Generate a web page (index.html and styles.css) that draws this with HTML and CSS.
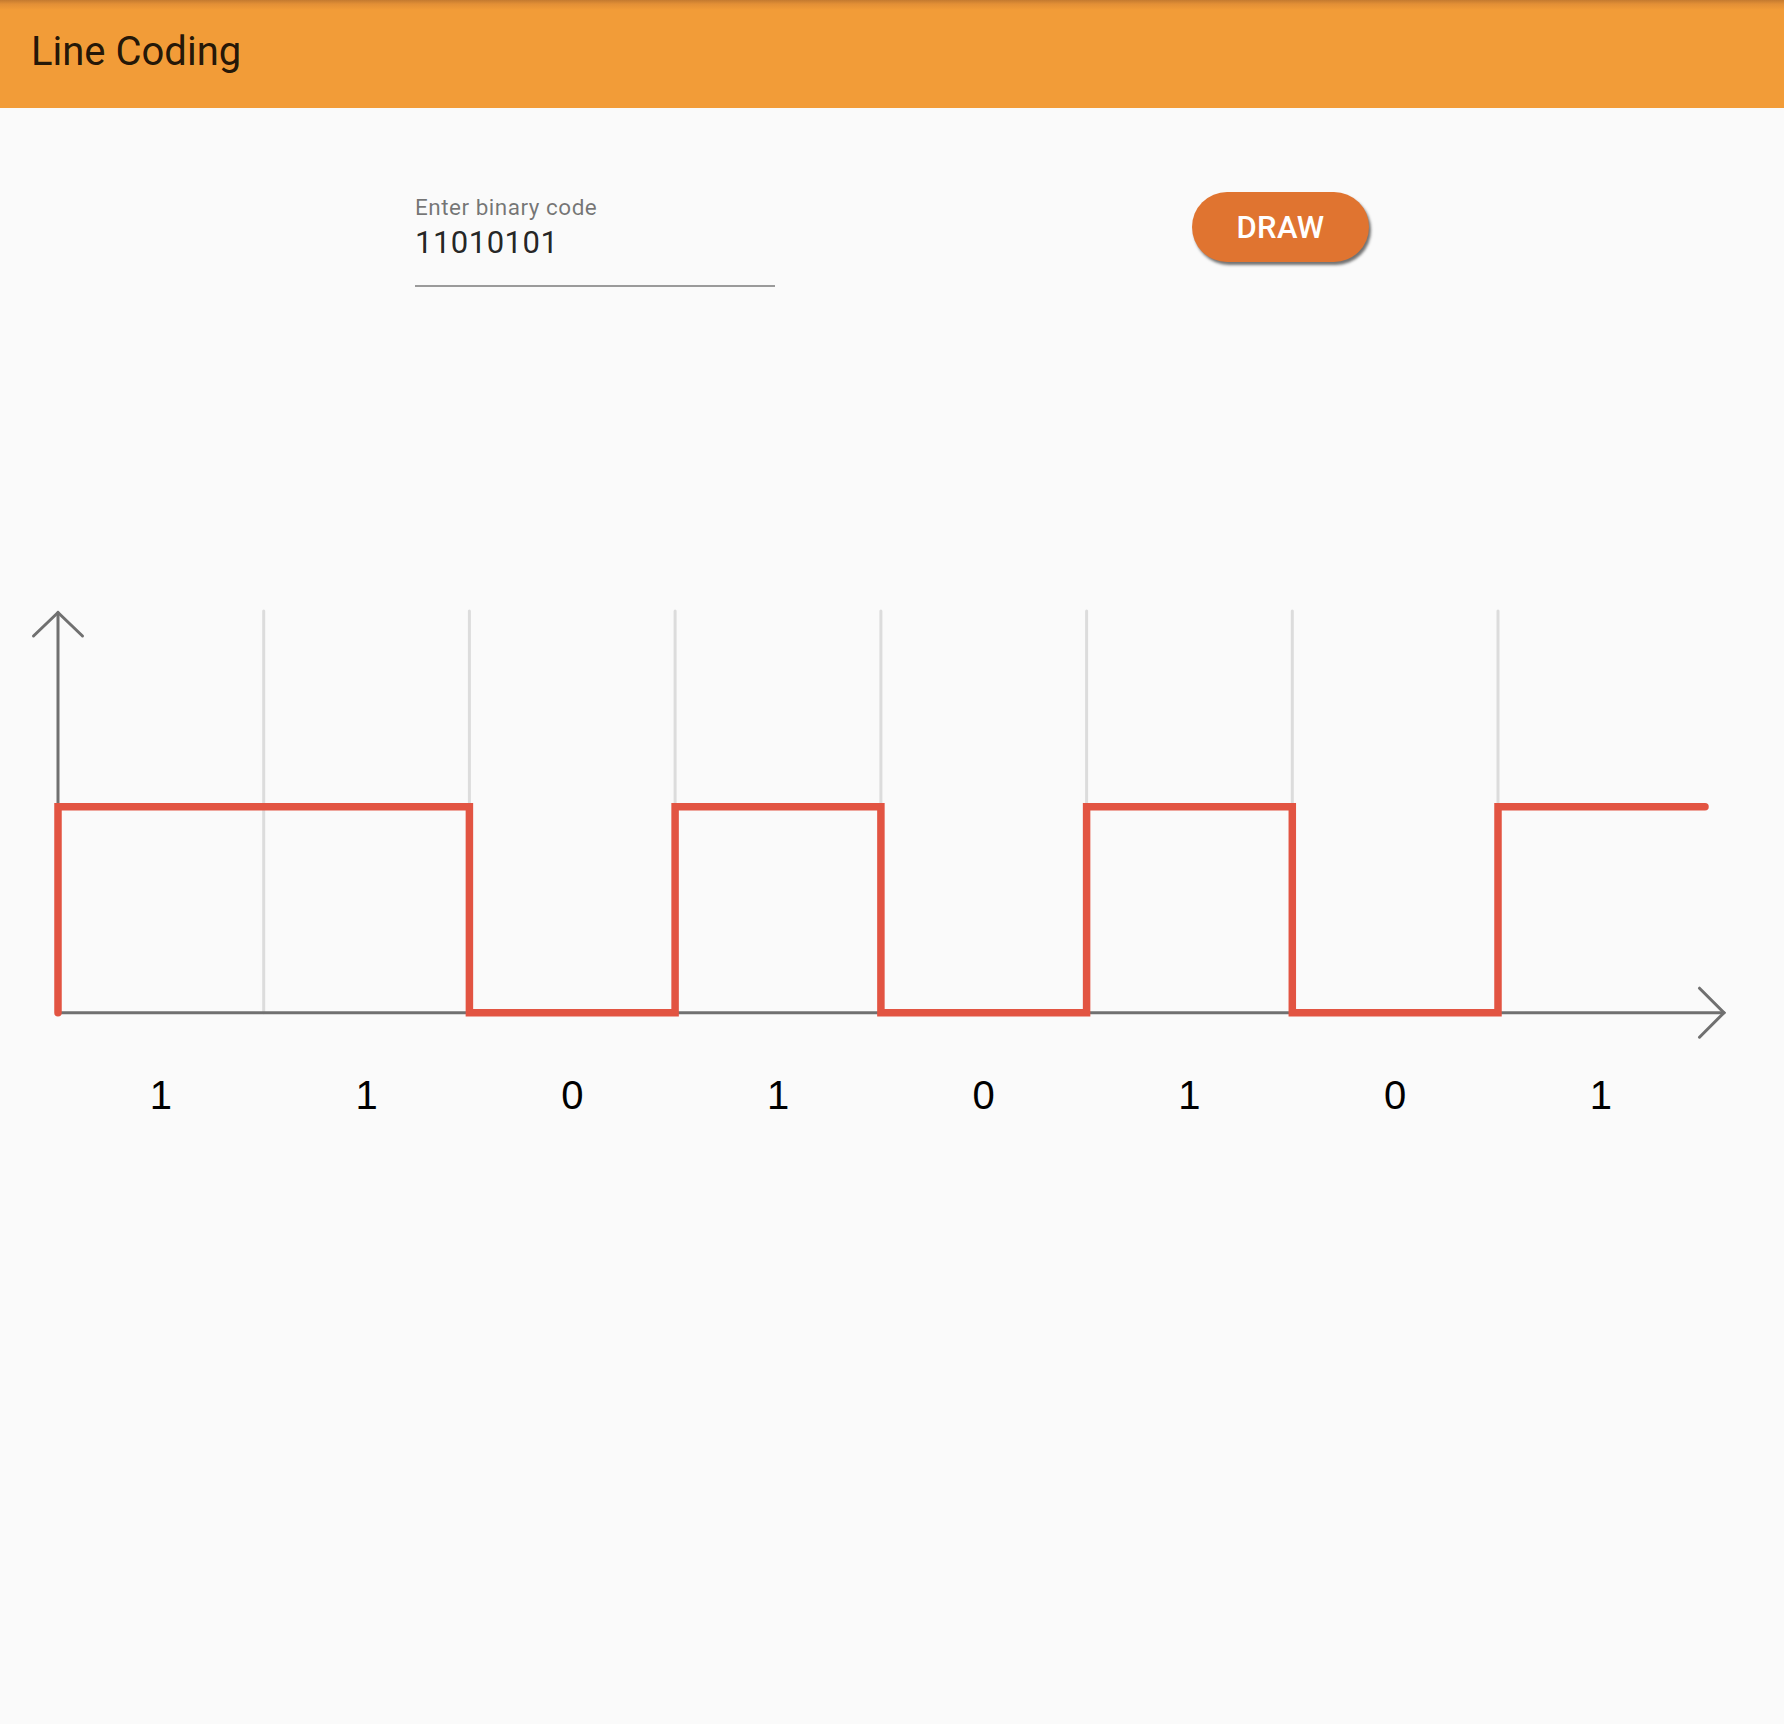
FILE: index.html
```html
<!DOCTYPE html>
<html lang="en">
<head>
<meta charset="utf-8">
<title>Line Coding</title>
<link rel="stylesheet" href="styles.css">
</head>
<body>
<header class="toolbar">
  <h1 class="title">Line Coding</h1>
</header>
<main class="content">
  <div class="form-row">
    <div class="field">
      <label class="field-label" for="code">Enter binary code</label>
      <input class="field-input" id="code" type="text" value="11010101">
    </div>
    <button class="draw-btn" type="button">DRAW</button>
  </div>
  <svg class="chart" viewBox="0 0 1784 540" width="1784" height="540" xmlns="http://www.w3.org/2000/svg">
    <g class="grid">
      <line x1="263.7" y1="21" x2="263.7" y2="422.7"/>
      <line x1="469.4" y1="21" x2="469.4" y2="422.7"/>
      <line x1="675.1" y1="21" x2="675.1" y2="422.7"/>
      <line x1="880.9" y1="21" x2="880.9" y2="422.7"/>
      <line x1="1086.6" y1="21" x2="1086.6" y2="422.7"/>
      <line x1="1292.3" y1="21" x2="1292.3" y2="422.7"/>
      <line x1="1498" y1="21" x2="1498" y2="422.7"/>
    </g>
    <g class="axis">
      <line x1="58" y1="422.7" x2="58" y2="22.5"/>
      <polyline points="33.5,46 58,22.5 82.5,46"/>
      <line x1="58" y1="422.7" x2="1724" y2="422.7"/>
      <polyline points="1699.5,398.2 1724,422.7 1699.5,447.2"/>
    </g>
    <polyline class="signal" points="58,422.7 58,216.8 469.4,216.8 469.4,422.7 675.1,422.7 675.1,216.8 880.9,216.8 880.9,422.7 1086.6,422.7 1086.6,216.8 1292.3,216.8 1292.3,422.7 1498,422.7 1498,216.8 1705,216.8"/>
    <g class="bits">
      <text x="160.9" y="518.5">1</text>
      <text x="366.6" y="518.5">1</text>
      <text x="572.3" y="518.5">0</text>
      <text x="778" y="518.5">1</text>
      <text x="983.7" y="518.5">0</text>
      <text x="1189.4" y="518.5">1</text>
      <text x="1395.2" y="518.5">0</text>
      <text x="1600.9" y="518.5">1</text>
    </g>
  </svg>
</main>
</body>
</html>
```

FILE: styles.css
```css
html, body {
  margin: 0;
  padding: 0;
}

body {
  background: #fafafa;
  font-family: Roboto, "Noto Sans", "Liberation Sans", sans-serif;
  width: 1784px;
  min-height: 1724px;
}

.toolbar {
  height: 108px;
  box-sizing: border-box;
  padding-left: 31px;
  display: flex;
  align-items: center;
  background: linear-gradient(to bottom, #c47a30 0px, #e28f36 4px, #f29c38 10px, #f29c38 100%);
}

.title {
  margin: 0;
  font-family: Roboto, sans-serif;
  font-weight: 400;
  font-size: 40px;
  line-height: 48px;
  color: rgba(0, 0, 0, 0.87);
  padding-bottom: 4px;
}

.content {
  display: block;
}

.form-row {
  display: flex;
  align-items: flex-start;
  margin-top: 84px;
  padding-left: 415px;
}

.field {
  width: 360px;
  padding-top: 3px;
  display: flex;
  flex-direction: column;
  border-bottom: 2px solid #9a9a9a;
  padding-bottom: 24px;
}

.field-label {
  font-family: Roboto, sans-serif;
  font-size: 22.5px;
  letter-spacing: 0.5px;
  line-height: 24px;
  color: rgba(0, 0, 0, 0.54);
  margin-bottom: 6px;
}

.field-input {
  font-family: Roboto, sans-serif;
  font-size: 31px;
  letter-spacing: 0.5px;
  line-height: 36px;
  height: 36px;
  padding: 0;
  margin: 0;
  border: none;
  outline: none;
  background: transparent;
  color: rgba(0, 0, 0, 0.87);
  width: 100%;
}

.draw-btn {
  margin-left: 417px;
  width: 177px;
  height: 70px;
  border: none;
  border-radius: 35px;
  background: #e07430;
  color: #ffffff;
  font-family: Roboto, sans-serif;
  font-weight: 500;
  font-size: 31px;
  letter-spacing: 0.3px;
  padding: 0;
  box-shadow: 2px 3px 3px rgba(0, 0, 0, 0.55);
  cursor: pointer;
}

.chart {
  display: block;
  margin-top: 303px;
}

.grid line {
  stroke: #dcdcdc;
  stroke-width: 3;
  stroke-linecap: round;
}

.axis line,
.axis polyline {
  stroke: #707070;
  stroke-width: 3;
  fill: none;
  stroke-linecap: round;
  stroke-linejoin: miter;
}

.signal {
  fill: none;
  stroke: #e25442;
  stroke-width: 7.5;
  stroke-linecap: round;
  stroke-linejoin: miter;
}

.bits text {
  font-family: "Liberation Sans", Arial, sans-serif;
  font-size: 40px;
  fill: #000000;
  text-anchor: middle;
}
```
